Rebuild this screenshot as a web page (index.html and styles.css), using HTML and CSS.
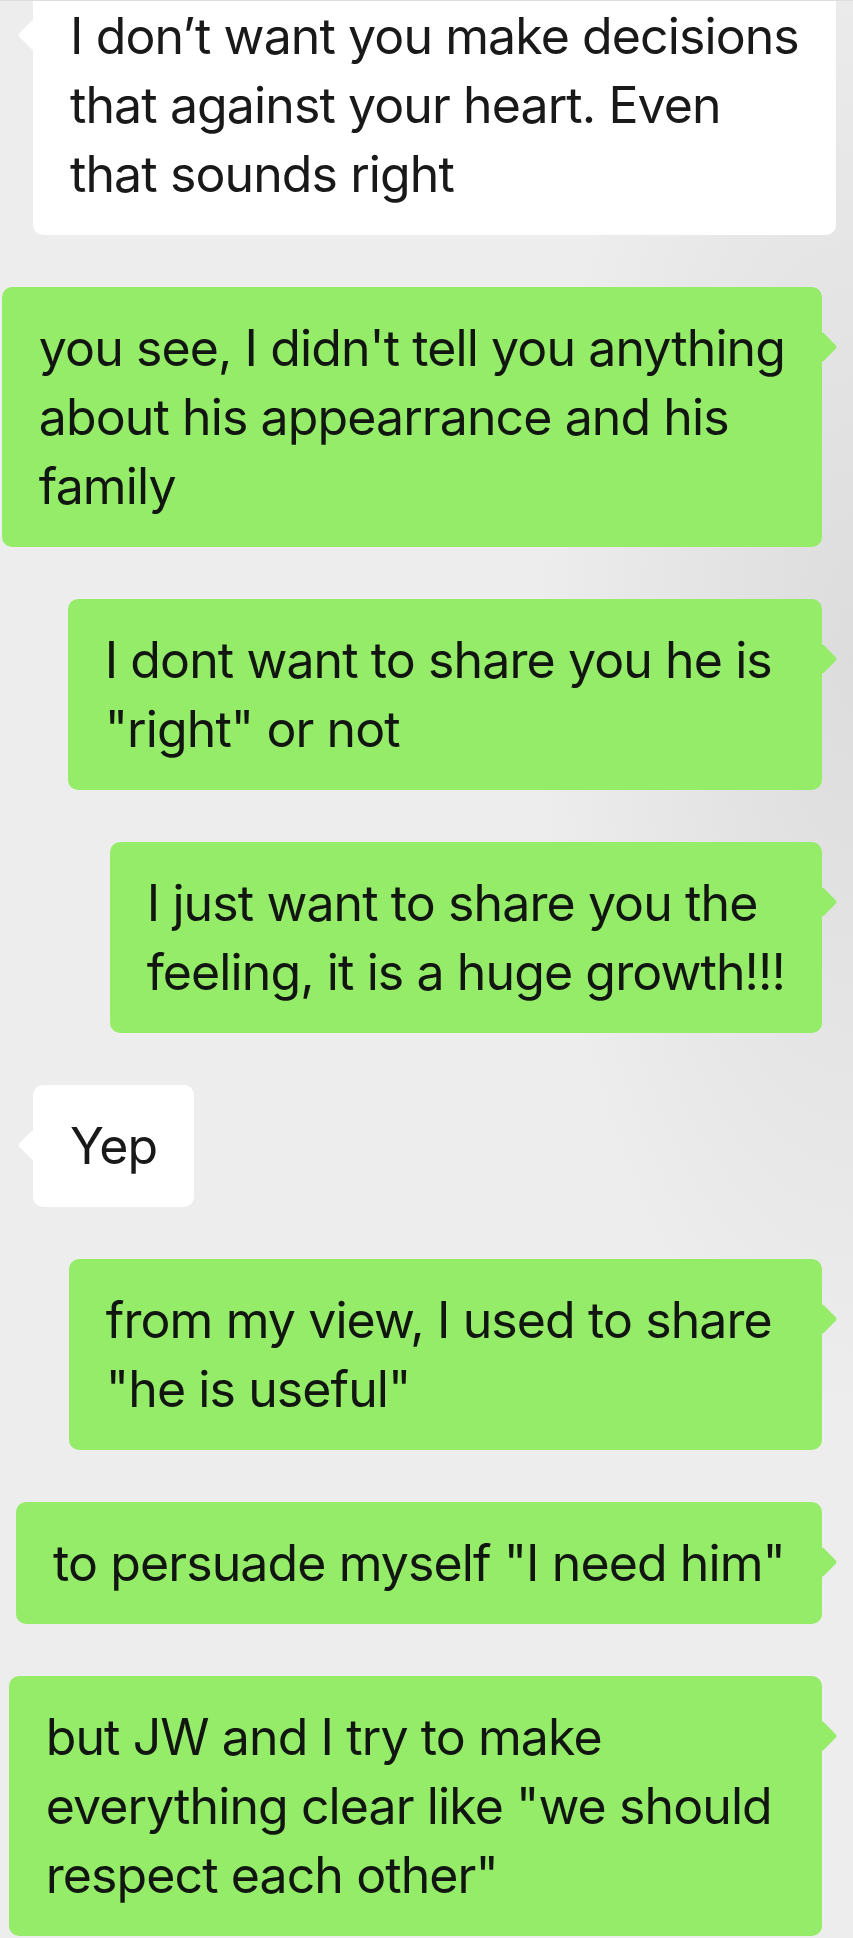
FILE: index.html
```html
<!DOCTYPE html>
<html lang="en">
<head>
  <meta charset="UTF-8" />
  <title>Chat</title>
  <link rel="stylesheet" href="styles.css">
</head>
<body>
  <div class="chat">
    <div class="row in">
      <div class="bubble">I don’t want you make decisions<br>that against your heart. Even<br>that sounds right</div>
    </div>
    <div class="row out">
      <div class="bubble">you see, I didn't tell you anything<br>about his appearrance and his<br>family</div>
    </div>
    <div class="row out">
      <div class="bubble">I dont want to share you he is&nbsp;<br>"right" or not</div>
    </div>
    <div class="row out">
      <div class="bubble">I just want to share you the<br>feeling, it is a huge growth!!!</div>
    </div>
    <div class="row in">
      <div class="bubble">Yep</div>
    </div>
    <div class="row out">
      <div class="bubble">from my view, I used to share&nbsp;<br>"he is useful"</div>
    </div>
    <div class="row out">
      <div class="bubble">to persuade myself "I need him"</div>
    </div>
    <div class="row out">
      <div class="bubble">but JW and I try to make<br>everything clear like "we should&nbsp;<br>respect each other"</div>
    </div>
  </div>
</body>
</html>
```

FILE: styles.css
```css
html,
body {
  margin: 0;
}
body {
  height: 1938px;
  overflow: hidden;
  background:
    radial-gradient(ellipse 320px 760px at 100% 34%, rgba(0, 0, 0, 0.07), rgba(0, 0, 0, 0)),
    #ededed;
  border-top: 1px solid #dedede;
  font-family: Inter, "Noto Sans", sans-serif;
  color: #191919;
}
.chat {
  display: flex;
  flex-direction: column;
  gap: 52px;
  margin-top: -26px;
  padding-right: 31px;
}
.row {
  display: flex;
}
.row.out {
  justify-content: flex-end;
}
.bubble {
  position: relative;
  padding: 27px 37px 26px;
  font-size: 50px;
  line-height: 69px;
  letter-spacing: -0.9px;
  border-radius: 10px;
  white-space: nowrap;
}
.in .bubble {
  margin-left: 33px;
  background: #fff;
}
.out .bubble {
  background: #95ec69;
  color: #121610;
}
.bubble::before {
  content: "";
  position: absolute;
  top: 49px;
  width: 22px;
  height: 22px;
  background: inherit;
  border-radius: 3px;
  transform: rotate(45deg);
}
.in .bubble::before {
  left: -11px;
}
.out .bubble::before {
  right: -11px;
}
```
